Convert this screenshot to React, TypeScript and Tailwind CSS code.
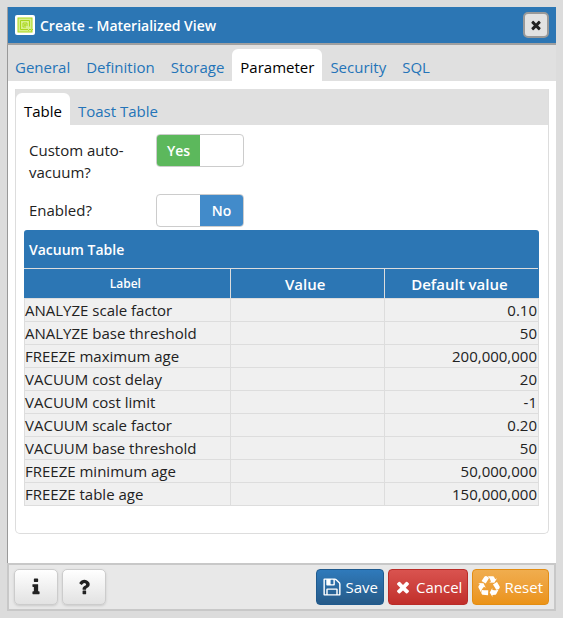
import { useState } from "react";
import type { ReactNode } from "react";

const TIMES =
  "M1490 1322q0 40-28 68l-136 136q-28 28-68 28t-68-28l-294-294-294 294q-28 28-68 28t-68-28l-136-136q-28-28-28-68t28-68l294-294-294-294q-28-28-28-68t28-68l136-136q28-28 68-28t68 28l294 294 294-294q28-28 68-28t68 28l136 136q28 28 28 68t-28 68l-294 294 294 294q28 28 28 68z";
const FLOPPY =
  "M512 1536h768v-384h-768v384zm896 0h128v-896q0-14-10-38.5t-20-34.5l-281-281q-10-10-34-20t-39-10v416q0 40-28 68t-68 28h-576q-40 0-68-28t-28-68v-416h-128v1280h128v-416q0-40 28-68t68-28h832q40 0 68 28t28 68v416zm-384-928v-320q0-13-9.5-22.5t-22.5-9.5h-192q-13 0-22.5 9.5t-9.5 22.5v320q0 13 9.5 22.5t22.5 9.5h192q13 0 22.5-9.5t9.5-22.5zm640 32v928q0 40-28 68t-68 28h-1344q-40 0-68-28t-28-68v-1344q0-40 28-68t68-28h928q40 0 88 20t76 48l280 280q28 28 48 76t20 88z";
const INFO =
  "M1216 1344v128q0 26-19 45t-45 19h-512q-26 0-45-19t-19-45v-128q0-26 19-45t45-19h64v-384h-64q-26 0-45-19t-19-45v-128q0-26 19-45t45-19h384q26 0 45 19t19 45v576h64q26 0 45 19t19 45zm-128-1152v192q0 26-19 45t-45 19h-256q-26 0-45-19t-19-45v-192q0-26 19-45t45-19h256q26 0 45 19t19 45z";
const QUESTION =
  "M1088 1256v240q0 16-12 28t-28 12h-240q-16 0-28-12t-12-28v-240q0-16 12-28t28-12h240q16 0 28 12t12 28zm316-600q0 54-15.5 101t-35 76.5-55 59.5-57.5 43.5-61 35.5q-41 23-68.5 65t-27.5 67q0 17-12 32.5t-28 15.5h-240q-15 0-25.5-18.5t-10.5-37.5v-45q0-83 65-156.5t143-108.5q59-27 84-56t25-76q0-42-46.5-74t-107.5-32q-65 0-108 29-35 25-107 115-13 16-31 16-12 0-25-8l-164-125q-13-10-15.5-25t5.5-28q160-266 464-266 80 0 161 31t146 83 106 127.5 41 158.5z";
const RECYCLE =
  "M836 1169l-15 368-2 22-420-29q-36-3-67-31.5t-47-65.5q-11-27-14.5-55t4-65 12-55 21.5-64 19-53q78 12 509 28zm-387-586l180 379-147-92q-63 72-111.5 144.5t-72.5 125-39.5 94.5-18.5 63l-4 21-190-357q-17-26-18-56t6-47l8-18q35-63 114-188l-140-86zm1231 517l-188 359q-12 29-36.5 46.5t-43.5 20.5l-18 4q-71 7-219 12l8 164-230-367 211-362 7 173q170 16 283 5t170-33zm-785-924q-47 63-265 435l-317-187-19-12 225-356q20-31 60-45t80-10q24 2 48.5 12t42 21 41.5 33 36 34.5 36 39.5 32 35zm655 307l212 363q18 37 12.5 76t-27.5 74q-13 20-33 37t-38 28-48.5 22-47 16-51.5 14-46 12q-34-72-265-436l313-195zm-143-226l142-83-220 373-419-20 151-86q-34-89-75-166t-75.5-123.5-64.5-80-47-46.5l-17-13 405 1q31-3 58 10.5t39 28.5l11 15q39 61 112 190z";

function Icon({ path, className }: { path: string; className: string }) {
  return (
    <svg viewBox="0 0 1792 1792" fill="currentColor" aria-hidden="true" className={className}>
      <path d={path} />
    </svg>
  );
}

function ViewIcon() {
  return (
    <svg viewBox="0 0 20 20" aria-hidden="true" className="size-5 shrink-0">
      <rect width="20" height="20" rx="2" fill="#fff" />
      <rect x="3" y="3" width="14" height="14" fill="#d8f08c" stroke="#a9d61c" />
      <path d="M12 14.500H5.500v-9h9v6M11 12H8V8h4v3M9.500 9.500h1v1h-1z" fill="none" stroke="#a9d61c" />
      <path d="M12 14l1.500 1.500L15 14l1.500 1.500L18 14" fill="none" stroke="#a9d61c" />
    </svg>
  );
}

const tabs = ["General", "Definition", "Storage", "Parameter", "Security", "SQL"];

const rows = [
  ["ANALYZE scale factor", "0.10"],
  ["ANALYZE base threshold", "50"],
  ["FREEZE maximum age", "200,000,000"],
  ["VACUUM cost delay", "20"],
  ["VACUUM cost limit", "-1"],
  ["VACUUM scale factor", "0.20"],
  ["VACUUM base threshold", "50"],
  ["FREEZE minimum age", "50,000,000"],
  ["FREEZE table age", "150,000,000"],
];

function Tab({ active, children }: { active: boolean; children: ReactNode }) {
  return (
    <button
      type="button"
      role="tab"
      aria-selected={active}
      className={
        active
          ? "h-8 rounded-t-[6px] bg-white px-2 pt-[3px] text-black"
          : "h-8 px-2 pt-[3px] text-[#2474b8]"
      }
    >
      {children}
    </button>
  );
}

function SwitchRow({ id, label, initial }: { id: string; label: string; initial: boolean }) {
  const [on, setOn] = useState(initial);
  return (
    <div className="flex items-start">
      <label htmlFor={id} className="w-[127px] shrink-0 pt-[5px] pr-4 leading-[22px] text-[#222]">
        {label}
      </label>
      <label className="grid h-[33px] w-[88px] cursor-pointer grid-cols-2 overflow-hidden rounded-[4px] border border-[#ccc] bg-white text-center text-sm leading-[31px] font-semibold text-white">
        <input
          id={id}
          type="checkbox"
          role="switch"
          checked={on}
          onChange={(e) => setOn(e.target.checked)}
          className="sr-only"
        />
        {on ? (
          <span className="bg-[#5cb85c]">Yes</span>
        ) : (
          <span className="col-start-2 bg-[#428bca]">No</span>
        )}
      </label>
    </div>
  );
}

const actionClass = "flex h-9 items-center gap-1 rounded-[4px] border bg-linear-to-b px-[5px] text-white";
const helpClass =
  "flex h-9 w-11 items-center justify-center rounded-[5px] border border-[#ccc] bg-linear-to-b from-white to-[#e2e2e2] text-[#222] shadow-sm";

export default function App() {
  return (
    <div className="flex min-h-screen flex-col bg-[#dcdcdc] p-[7px] font-['Open_Sans','Noto_Sans',sans-serif] text-[15px] leading-[22px]">
      <main className="flex flex-1 flex-col">
        <header className="flex h-[38px] items-center border-b-2 border-l border-[#a0a0a0] bg-[#2c76b4] pr-[7px] pl-[7px] text-white">
          <ViewIcon />
          <h1 className="flex-1 pt-px pl-[5px] text-sm font-semibold">Create - Materialized View</h1>
          <button
            type="button"
            aria-label="Close"
            className="flex size-[26px] items-center justify-center rounded-[5px] border-2 border-[#999] bg-[#e2e2e2] text-[#222]"
          >
            <Icon path={TIMES} className="size-[14px]" />
          </button>
        </header>

        <div className="flex flex-1 flex-col border-l border-[#999] bg-white">
          <div role="tablist" aria-label="Sections" className="flex h-9 items-end bg-[#e0e0e0] pr-2">
            {tabs.map((t) => (
              <div key={t} className="flex first:-ml-px">
                <Tab active={t === "Parameter"}>{t}</Tab>
              </div>
            ))}
          </div>

          <div className="flex flex-1 flex-col px-[7px] pt-2 pb-[29px]">
            <section className="flex flex-1 flex-col rounded-b-[5px] border border-t-0 border-[#ddd]">
              <div role="tablist" aria-label="Tables" className="flex h-9 items-end bg-[#e0e0e0]">
                <Tab active>Table</Tab>
                <Tab active={false}>Toast Table</Tab>
              </div>

              <div className="flex flex-col pt-[9px] pr-[9px] pb-[26px] pl-2">
                <div className="flex flex-col gap-[11px] px-[5px] pb-[3px]">
                  <SwitchRow id="custom" label="Custom auto-vacuum?" initial={true} />
                  <SwitchRow id="enabled" label="Enabled?" initial={false} />
                </div>
                <div className="overflow-hidden rounded-t-[3px]">
                  <h2 className="h-[38px] bg-[#2c76b4] px-[5px] text-sm leading-10 font-semibold text-white">Vacuum Table</h2>
                  <table className="w-full table-fixed border-collapse text-[#222]">
                    <thead>
                      <tr className="h-[30px] bg-[#2c76b4] text-white">
                        <th className="w-2/5 border border-[#ddd] border-l-[#2c76b4] p-0 pt-px pr-1 text-xs font-semibold">Label</th>
                        <th className="w-3/10 border border-[#ddd] p-0 pr-1 font-semibold">Value</th>
                        <th className="w-3/10 border border-[#ddd] border-r-[#2c76b4] p-0 pr-1 font-semibold">Default value</th>
                      </tr>
                    </thead>
                    <tbody>
                      {rows.map(([label, value]) => (
                        <tr key={label} className="h-[23px] bg-[#f0f0f0]">
                          <td className="border border-[#ddd] p-0">{label}</td>
                          <td className="border border-[#ddd] p-0" />
                          <td className="border border-[#ddd] p-0 pr-px text-right">{value}</td>
                        </tr>
                      ))}
                    </tbody>
                  </table>
                </div>
              </div>
            </section>
          </div>
        </div>

        <footer className="flex h-12 items-center gap-1 border-2 border-[#c8c8c8] bg-[#e8e8e8] px-[5px]">
          <button type="button" aria-label="Information" className={helpClass}>
            <Icon path={INFO} className="size-5" />
          </button>
          <button type="button" aria-label="Help" className={helpClass}>
            <Icon path={QUESTION} className="size-5" />
          </button>
          <div className="ml-auto flex gap-1">
            <button type="button" className={`${actionClass} border-[#1f5a8e] from-[#2f7abb] to-[#265a88]`}>
              <Icon path={FLOPPY} className="size-5" />
              Save
            </button>
            <button type="button" className={`${actionClass} border-[#b92c28] from-[#d9534f] to-[#c12e2a]`}>
              <Icon path={TIMES} className="size-[18px]" />
              Cancel
            </button>
            <button type="button" className={`${actionClass} border-[#e38d13] from-[#f0ad4e] to-[#eb9316]`}>
              <Icon path={RECYCLE} className="size-[22px]" />
              Reset
            </button>
          </div>
        </footer>
      </main>
    </div>
  );
}
